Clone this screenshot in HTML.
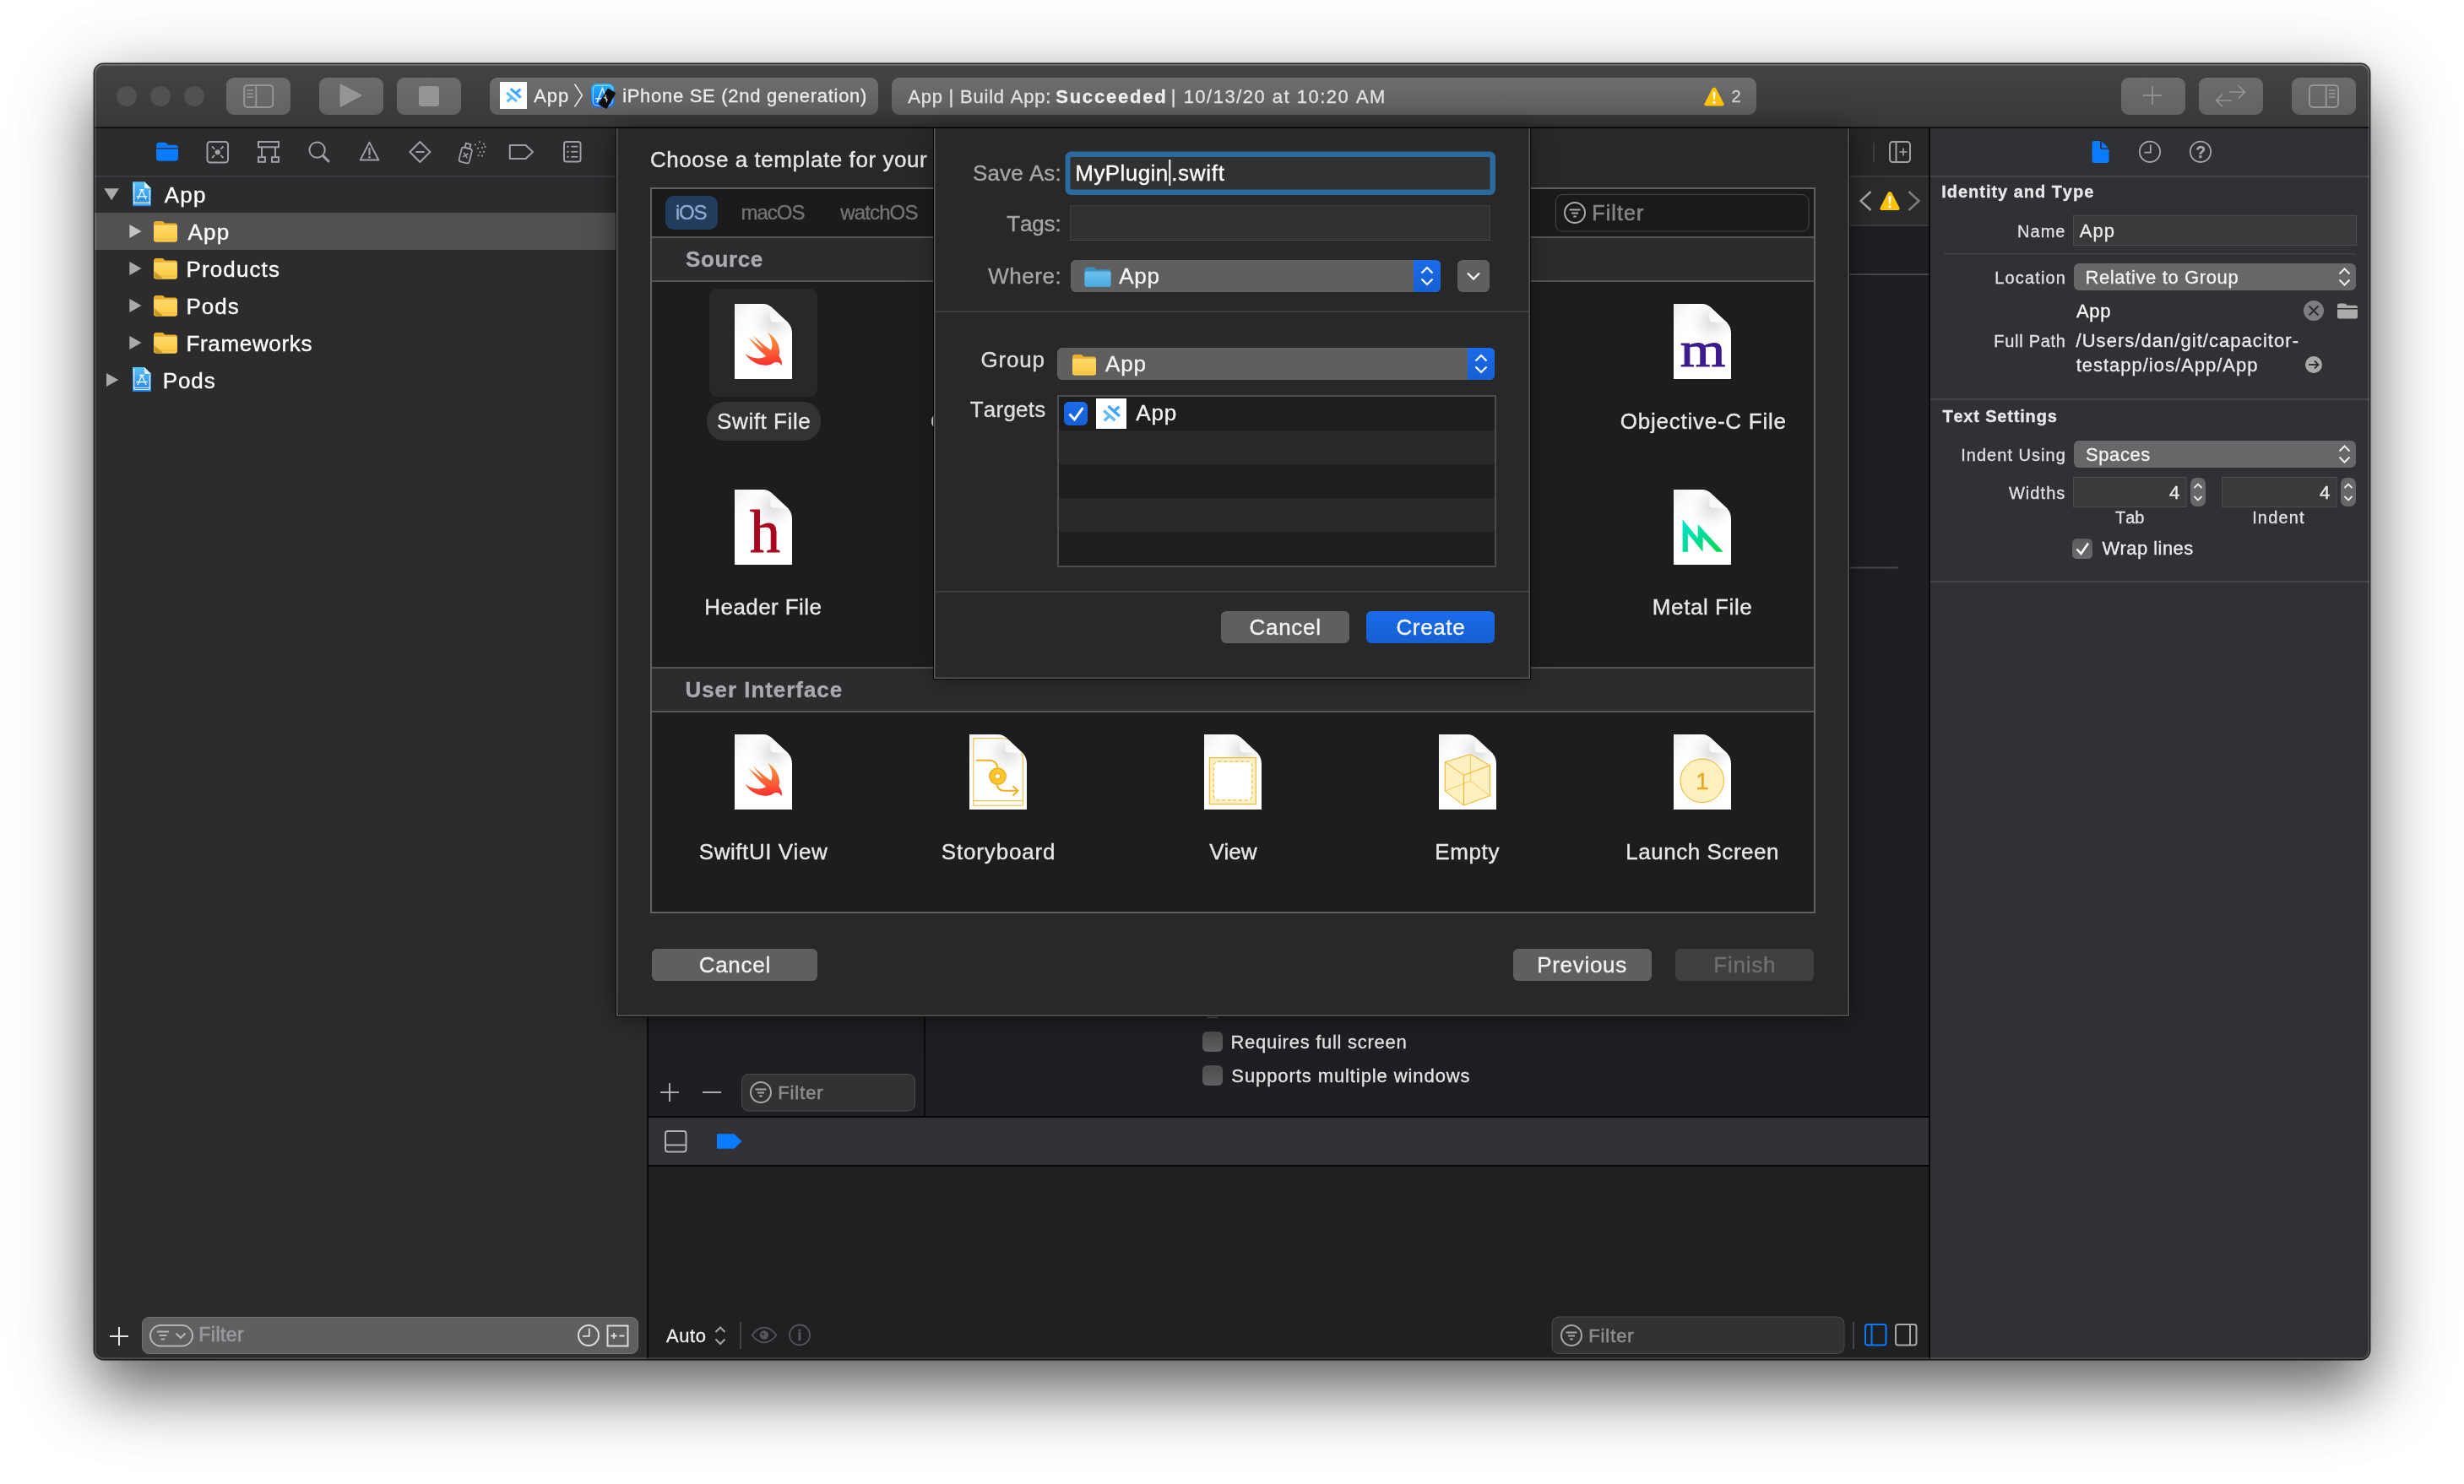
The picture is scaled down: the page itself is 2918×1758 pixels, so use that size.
<!DOCTYPE html>
<html><head><meta charset="utf-8"><title>Xcode - New File</title>
<style>
html,body{margin:0;padding:0;background:#fff;}
body{width:2918px;height:1758px;overflow:hidden;position:relative;font-family:"Liberation Sans",Arial,sans-serif;}
#win{position:absolute;left:112px;top:76px;width:2694px;height:1534px;border-radius:10.5px;overflow:hidden;background:#2c2c2e;}
#winshadow{position:absolute;left:112px;top:76px;width:2694px;height:1534px;border-radius:10.5px;
 box-shadow:0 0 0 1.4px rgba(0,0,0,.82),0 35px 76px rgba(0,0,0,.56),0 24px 120px rgba(0,0,0,.16),0 0 4px rgba(0,0,0,.3);}
#winhi{position:absolute;left:112px;top:76px;width:2694px;height:1534px;border-radius:10.5px;box-shadow:inset 0 1.6px 0 rgba(255,255,255,.14),inset 0 0 0 1.8px rgba(255,255,255,.15);pointer-events:none;}
svg{position:absolute;left:-112px;top:-76px;width:2918px;height:1758px;overflow:visible;will-change:transform;}
svg text{font-family:"Liberation Sans",Arial,sans-serif;font-kerning:none;white-space:pre;}
svg text.sf{font-family:"Liberation Serif","Times New Roman",serif;}
.sh{position:absolute;}
#sheet{left:618px;top:76px;width:1460px;height:1052px;box-shadow:0 0 0 1px rgba(0,0,0,.7),0 2px 30px rgba(0,0,0,.5);background:#282828;}
#save{left:994px;top:76px;width:706px;height:652px;box-shadow:0 0 0 1px rgba(0,0,0,.75),0 4px 26px rgba(0,0,0,.32);background:#282828;}
</style></head><body>
<div id="winshadow"></div>
<div id="win">
<svg viewBox="0 0 2918 1758">
<defs>
<linearGradient id="gTb" x1="0" y1="0" x2="0" y2="1"><stop offset="0" stop-color="#434446"/><stop offset="1" stop-color="#37383a"/></linearGradient>
<linearGradient id="gBtn" x1="0" y1="0" x2="0" y2="1"><stop offset="0" stop-color="#6b6c6e"/><stop offset="1" stop-color="#626365"/></linearGradient>
<linearGradient id="gFld" x1="0" y1="0" x2="0" y2="1"><stop offset="0" stop-color="#6d6e70"/><stop offset="1" stop-color="#5e5f61"/></linearGradient>
<linearGradient id="gBlue" x1="0" y1="0" x2="0" y2="1"><stop offset="0" stop-color="#1a6cea"/><stop offset="1" stop-color="#155fd2"/></linearGradient>
<linearGradient id="gChk" x1="0" y1="0" x2="0" y2="1"><stop offset="0" stop-color="#4c4c4e"/><stop offset="1" stop-color="#606062"/></linearGradient>
<linearGradient id="gChkOn" x1="0" y1="0" x2="0" y2="1"><stop offset="0" stop-color="#5c5c5f"/><stop offset="1" stop-color="#6a6a6d"/></linearGradient>
<linearGradient id="gPage" x1="0" y1="0" x2="0.5" y2="0.55"><stop offset="0" stop-color="#efefef"/><stop offset="0.32" stop-color="#fbfbfb"/><stop offset="0.55" stop-color="#ffffff"/></linearGradient>
<radialGradient id="gFoldSh" cx="45" cy="21" r="26" gradientUnits="userSpaceOnUse"><stop offset="0" stop-color="#000" stop-opacity="0.13"/><stop offset="0.6" stop-color="#000" stop-opacity="0.04"/><stop offset="1" stop-color="#000" stop-opacity="0"/></radialGradient>
<linearGradient id="gFlap" x1="0" y1="0" x2="1" y2="1"><stop offset="0" stop-color="#f4f4f4"/><stop offset="1" stop-color="#ffffff"/></linearGradient>
<linearGradient id="gSwift" x1="0" y1="0" x2="0" y2="1"><stop offset="0" stop-color="#fb9b3c"/><stop offset="0.5" stop-color="#fa6a38"/><stop offset="1" stop-color="#fb2d2f"/></linearGradient>
<linearGradient id="gMetal" x1="0" y1="0" x2="1" y2="1"><stop offset="0" stop-color="#00e3d2"/><stop offset="0.5" stop-color="#00dc96"/><stop offset="1" stop-color="#06d83e"/></linearGradient>
<linearGradient id="gXc" x1="0" y1="0" x2="0" y2="1"><stop offset="0" stop-color="#1fb4fb"/><stop offset="1" stop-color="#1668f5"/></linearGradient>
<linearGradient id="gProj" x1="0" y1="0" x2="0" y2="1"><stop offset="0" stop-color="#5bc3f7"/><stop offset="1" stop-color="#1b7fe8"/></linearGradient>
<linearGradient id="gFoldY" x1="0" y1="0" x2="0" y2="1"><stop offset="0" stop-color="#ffd968"/><stop offset="1" stop-color="#fbc944"/></linearGradient>
<linearGradient id="gFoldB" x1="0" y1="0" x2="0" y2="1"><stop offset="0" stop-color="#6cc3ee"/><stop offset="1" stop-color="#48a8de"/></linearGradient>
<linearGradient id="gSideSh" x1="0" y1="0" x2="1" y2="0"><stop offset="0" stop-color="#000" stop-opacity="0"/><stop offset="1" stop-color="#000" stop-opacity="0.28"/></linearGradient>
<clipPath id="cpPage"><path d="M0 0H34Q39.5 0 43.5 3.8L63 22Q68 27 68 35V89H0Z"/></clipPath>
<g id="page">
<path d="M0 0H34Q39.5 0 43.5 3.8L63 22Q68 27 68 35V89H0Z" fill="url(#gPage)"/>
<g clip-path="url(#cpPage)"><circle cx="45" cy="21" r="26" fill="url(#gFoldSh)"/></g>
<path d="M42 3.2Q43 3.4 43.5 3.8L63 22Q63.6 22.6 64 23.2Q60 21.4 54 21.6H47Q42.4 21.6 42.4 17V9Q42.6 5 42 3.2Z" fill="url(#gFlap)"/>
</g>
<g id="swiftbird"><path transform="translate(6.7,25.8) scale(2.4)" fill="url(#gSwift)" d="M13.543 3.41c4.114 2.47 6.545 7.162 5.549 11.131-.024.093-.05.181-.076.272l.002.001c2.062 2.538 1.5 5.258 1.236 4.745-1.072-2.086-3.066-1.568-4.088-1.043a6.803 6.803 0 0 1-.281.158l-.02.012-.002.002c-2.115 1.123-4.957 1.205-7.812-.022a12.568 12.568 0 0 1-5.64-4.838c.649.48 1.35.902 2.097 1.252 3.019 1.414 6.051 1.311 8.197-.002C9.651 12.73 7.101 9.67 5.146 7.191a10.628 10.628 0 0 1-1.005-1.384c2.34 2.142 6.038 4.83 7.365 5.576C8.69 8.408 6.208 4.743 6.324 4.86c4.436 4.47 8.528 6.996 8.528 6.996.154.085.27.154.36.213.085-.215.16-.437.224-.668.708-2.588-.09-5.548-1.893-7.992z"/></g>
<g id="capico"><rect x="0" y="0" width="32" height="32" fill="#fff"/>
<path d="M12.8 8.1L24.7 18.7M19.6 12.9L24.3 8.6" stroke="#3fa4ff" stroke-width="3" fill="none"/>
<path d="M8.2 12.8L20 23.1M13.6 18.8L8.6 23.4" stroke="#5cbcff" stroke-width="3" fill="none"/></g>
<g id="foldY"><path d="M0 4.5Q0 1.5 3 1.5H9.5Q11.3 1.5 12.3 2.8L13.2 4H25Q28 4 28 7V23Q28 26 25 26H3Q0 26 0 23Z" fill="#e8ae2c"/>
<path d="M0 8.2Q0 6.2 2 6.2H26Q28 6.2 28 8.2V23Q28 26 25 26H3Q0 26 0 23Z" fill="url(#gFoldY)"/><path d="M0.4 22.6H27.6" stroke="#eab83a" stroke-width="1"/></g>
<g id="foldY2"><use href="#foldY"/><path d="M0.6 16.5L11 25.6H3Q0.6 25.4 0.6 23Z" fill="#b98a1e" opacity="0.75"/></g>
<g id="proj"><path d="M0 0H14L22 8V29H0Z" fill="url(#gProj)"/><path d="M14 0L22 8H15.5Q14 8 14 6.5Z" fill="#d9f0ff"/>
<path d="M1.8 2V26.5H20.2V9.5" fill="none" stroke="#ffffff" stroke-width="1.1" opacity="0.9"/>
<path d="M1.5 24.3H20.5" stroke="#fff" stroke-width="1" opacity="0.9"/>
<path d="M6 21L11 9.5L16 21M4.5 17.5H17.5M8 9.5h6" fill="none" stroke="#ffffff" stroke-width="1.3" opacity="0.92"/></g>
<g id="filt"><circle cx="0" cy="0" r="12" fill="none" stroke-width="2"/><path d="M-6.5 -3.5H6.5M-4 0.5H4M-1.8 4.5H1.8" stroke-width="2" fill="none"/></g>
<g id="warn"><path d="M0 -11.5Q1.6 -11.5 2.5 -9.8L11.2 7.2Q12.6 10.2 9.5 10.5H-9.5Q-12.6 10.2 -11.2 7.2L-2.5 -9.8Q-1.6 -11.5 0 -11.5Z" fill="#fec309"/><path d="M-1.6 -5.5Q0 -7 1.6 -5.5L0.9 3.2H-0.9Z" fill="#fff"/><circle cx="0" cy="6.4" r="1.55" fill="#fff"/></g>
</defs>

<rect x="112" y="75" width="2694" height="76" fill="url(#gTb)"/>
<rect x="112" y="150.5" width="2694" height="1.4" fill="#050506"/>
<rect x="112" y="152" width="654" height="1458" fill="#2c2c2e"/>
<rect x="768" y="152" width="1516" height="1458" fill="#1e1f22"/>
<rect x="766" y="152" width="2" height="1458" fill="#0a0a0b"/>
<rect x="2286" y="152" width="520" height="1458" fill="#303134"/>
<rect x="2284" y="152" width="2" height="1458" fill="#0a0a0b"/>
<circle cx="150" cy="114" r="12" fill="#505153"/>
<circle cx="190" cy="114" r="12" fill="#505153"/>
<circle cx="230" cy="114" r="12" fill="#505153"/>
<rect x="268" y="92" width="76" height="44" fill="url(#gBtn)" rx="9"/>
<rect x="378" y="92" width="76" height="44" fill="url(#gBtn)" rx="9"/>
<rect x="470" y="92" width="76" height="44" fill="url(#gBtn)" rx="9"/>
<rect x="2512" y="92" width="76" height="44" fill="url(#gBtn)" rx="9"/>
<rect x="2604" y="92" width="76" height="44" fill="url(#gBtn)" rx="9"/>
<rect x="2714" y="92" width="76" height="44" fill="url(#gBtn)" rx="9"/>
<rect x="289.2" y="101" width="34" height="26" fill="none" rx="4" stroke="#949597" stroke-width="2"/>
<line x1="303.3" y1="101" x2="303.3" y2="127" stroke="#949597" stroke-width="2" stroke-linecap="butt"/>
<line x1="292.4" y1="107" x2="299.9" y2="107" stroke="#949597" stroke-width="1.6" stroke-linecap="butt"/>
<line x1="292.4" y1="111" x2="299.9" y2="111" stroke="#949597" stroke-width="1.6" stroke-linecap="butt"/>
<line x1="292.4" y1="115" x2="299.9" y2="115" stroke="#949597" stroke-width="1.6" stroke-linecap="butt"/>
<path d="M402.5 100.5Q402.5 98.8 404 99.6L427.6 112Q429 113 427.6 114L404 126.4Q402.5 127.2 402.5 125.5Z" fill="#949597"/>
<rect x="496" y="102" width="24" height="24" fill="#949597" rx="3"/>
<line x1="2538" y1="113" x2="2560" y2="113" stroke="#949597" stroke-width="1.7" stroke-linecap="butt"/>
<line x1="2549" y1="102" x2="2549" y2="124" stroke="#949597" stroke-width="1.7" stroke-linecap="butt"/>
<path d="M2640 109H2658.5M2650.8 101.5L2658.5 109L2650.8 116.5" fill="none" stroke="#949597" stroke-width="1.7"/>
<path d="M2643 119H2624.6M2632.3 111.5L2624.6 119L2632.3 126.5" fill="none" stroke="#949597" stroke-width="1.7"/>
<rect x="2735" y="101" width="34" height="26" fill="none" rx="4" stroke="#949597" stroke-width="2"/>
<line x1="2754.7" y1="101" x2="2754.7" y2="127" stroke="#949597" stroke-width="2" stroke-linecap="butt"/>
<line x1="2758.2" y1="107" x2="2765.7" y2="107" stroke="#949597" stroke-width="1.6" stroke-linecap="butt"/>
<line x1="2758.2" y1="111" x2="2765.7" y2="111" stroke="#949597" stroke-width="1.6" stroke-linecap="butt"/>
<line x1="2758.2" y1="115" x2="2765.7" y2="115" stroke="#949597" stroke-width="1.6" stroke-linecap="butt"/>
<rect x="580" y="92" width="460" height="44" fill="url(#gFld)" rx="9"/>
<use href="#capico" x="592" y="97"/>
<text x="632.26" y="120.50" font-size="22" fill="#ececec" letter-spacing="0.911" stroke="#ececec" stroke-width="0.3">App</text>
<path d="M680.5 99.5L689.4 113L680.5 126.5" fill="none" stroke="#e4e4e4" stroke-width="1.6"/>
<rect x="700" y="99" width="27.5" height="28.3" fill="url(#gXc)" rx="6.5"/>
<rect x="702.3" y="101.3" width="22.9" height="23.7" fill="none" rx="4.5" stroke="#bfe4ff" stroke-width="0.9"/>
<path d="M707 121.5L713.5 104.5L716.5 113M705 116.8H716" fill="none" stroke="#d6eeff" stroke-width="1.6"/>
<rect x="713.3" y="105.6" width="11.4" height="22.4" rx="1.9" fill="#0c0c0c" transform="rotate(31 719 116.8)"/>
<path d="M714.8 114.8L719.8 118.6M717 112L718.6 121.2" fill="none" stroke="#d8d8d8" stroke-width="1.1"/>
<text x="737.13" y="120.50" font-size="22" fill="#ececec" letter-spacing="0.709" stroke="#ececec" stroke-width="0.3">iPhone SE (2nd generation)</text>
<rect x="1056" y="92" width="1024" height="44" fill="url(#gFld)" rx="9"/>
<text x="1075.26" y="122.00" font-size="22" fill="#e2e2e2" letter-spacing="0.779" stroke="#e2e2e2" stroke-width="0.3">App | Build App:</text>
<text x="1250.17" y="122.00" font-size="22" fill="#efefef" font-weight="bold" letter-spacing="1.802" stroke="#efefef" stroke-width="0.3">Succeeded</text>
<text x="1386.83" y="122.00" font-size="22" fill="#e2e2e2" letter-spacing="1.494" stroke="#e2e2e2" stroke-width="0.3">| 10/13/20 at 10:20 AM</text>
<use href="#warn" x="2030" y="115"/>
<text x="2050.49" y="121.20" font-size="20" fill="#d2d2d2" stroke="#d2d2d2" stroke-width="0.3">2</text>
<rect x="112" y="208" width="654" height="2" fill="#3b3c3f"/>
<path d="M185 172.8Q185 168.8 189 168.8H194.5Q196.3 168.8 197.6 170.1L199.2 171.7H207Q211 171.7 211 175.2H185Z" fill="#0a7aff"/>
<path d="M185 176.6H211V186.8Q211 190.8 207 190.8H189Q185 190.8 185 186.8Z" fill="#0a7aff"/>
<rect x="245.5" y="168" width="24.5" height="24.5" fill="none" rx="3.2" stroke="#9fa0a3" stroke-width="2"/>
<circle cx="257.75" cy="180.25" r="3.1" fill="#9fa0a3"/>
<path d="M251 173.5L254.2 176.7M264.5 173.5L261.3 176.7M251 187L254.2 183.8M264.5 187L261.3 183.8" fill="none" stroke="#9fa0a3" stroke-width="1.8"/>
<rect x="306" y="168" width="24" height="6.3" fill="none" stroke="#9fa0a3" stroke-width="2"/>
<rect x="306" y="186.2" width="8" height="5.6" fill="none" stroke="#9fa0a3" stroke-width="2"/>
<rect x="322" y="186.2" width="8" height="5.6" fill="none" stroke="#9fa0a3" stroke-width="2"/>
<line x1="310" y1="174.3" x2="310" y2="186.2" stroke="#9fa0a3" stroke-width="2" stroke-linecap="butt"/>
<line x1="326" y1="174.3" x2="326" y2="186.2" stroke="#9fa0a3" stroke-width="2" stroke-linecap="butt"/>
<circle cx="375.6" cy="177.6" r="9.2" fill="none" stroke="#9fa0a3" stroke-width="2"/>
<line x1="382.6" y1="184.6" x2="389" y2="191" stroke="#9fa0a3" stroke-width="3" stroke-linecap="round"/>
<path d="M437.5 168.6L448.3 189.6H426.7Z" fill="none" stroke="#9fa0a3" stroke-width="2" stroke-linejoin="round"/>
<line x1="437.5" y1="176" x2="437.5" y2="183" stroke="#9fa0a3" stroke-width="2.2" stroke-linecap="round"/>
<circle cx="437.5" cy="186.3" r="1.3" fill="#9fa0a3"/>
<path d="M497.4 168L509.4 180L497.4 192L485.4 180Z" fill="none" stroke="#9fa0a3" stroke-width="2" stroke-linejoin="round"/>
<line x1="492.3" y1="180" x2="502.5" y2="180" stroke="#9fa0a3" stroke-width="2" stroke-linecap="butt"/>
<g transform="rotate(14 551.5 183)" fill="none" stroke="#9fa0a3" stroke-width="1.8"><rect x="545.3" y="175.3" width="12.4" height="17.4" rx="2.6"/><rect x="548.6" y="170" width="5.8" height="5.3"/><path d="M548.8 181.3L554.2 186.7M554.2 181.3L548.8 186.7" stroke-width="1.5"/></g>
<rect x="562.1" y="170.6" width="1.8" height="1.8" fill="#9fa0a3"/>
<rect x="567.1" y="167.4" width="1.8" height="1.8" fill="#9fa0a3"/>
<rect x="572.1" y="169.6" width="1.8" height="1.8" fill="#9fa0a3"/>
<rect x="565.1" y="174.7" width="1.8" height="1.8" fill="#9fa0a3"/>
<rect x="570.1" y="174.1" width="1.8" height="1.8" fill="#9fa0a3"/>
<rect x="573.6" y="172.9" width="1.8" height="1.8" fill="#9fa0a3"/>
<rect x="567.6" y="179.3" width="1.8" height="1.8" fill="#9fa0a3"/>
<rect x="572.1" y="178.9" width="1.8" height="1.8" fill="#9fa0a3"/>
<rect x="565.6" y="183.4" width="1.8" height="1.8" fill="#9fa0a3"/>
<rect x="570.1" y="183.6" width="1.8" height="1.8" fill="#9fa0a3"/>
<path d="M603.8 172H622.5L631 180L622.5 188H603.8Z" fill="none" stroke="#9fa0a3" stroke-width="2" stroke-linejoin="round"/>
<rect x="668" y="168" width="19.5" height="23.6" fill="none" rx="2.6" stroke="#9fa0a3" stroke-width="2"/>
<line x1="676.3" y1="173.6" x2="684.3" y2="173.6" stroke="#9fa0a3" stroke-width="1.8" stroke-linecap="butt"/>
<rect x="671.4" y="172.7" width="2.2" height="1.8" fill="#9fa0a3"/>
<line x1="676.3" y1="179.8" x2="684.3" y2="179.8" stroke="#9fa0a3" stroke-width="1.8" stroke-linecap="butt"/>
<rect x="671.4" y="178.9" width="2.2" height="1.8" fill="#9fa0a3"/>
<line x1="676.3" y1="185.8" x2="684.3" y2="185.8" stroke="#9fa0a3" stroke-width="1.8" stroke-linecap="butt"/>
<rect x="671.4" y="184.9" width="2.2" height="1.8" fill="#9fa0a3"/>
<rect x="112" y="252" width="654" height="44" fill="#515153"/>
<path d="M123.3 223.3H141L132.1 237.2Z" fill="#a9a9ab"/>
<use href="#proj" x="157" y="215.3"/>
<text x="194.75" y="239.70" font-size="26" fill="#ffffff" letter-spacing="1.190" stroke="#ffffff" stroke-width="0.35">App</text>
<path d="M153.4 266 V282 L167.6 274 Z" fill="#c4c4c6"/>
<use href="#foldY" x="182" y="260.5"/>
<text x="222.55" y="283.75" font-size="26" fill="#ffffff" letter-spacing="1.140" stroke="#ffffff" stroke-width="0.35">App</text>
<path d="M153.4 310 V326 L167.6 318 Z" fill="#a9a9ab"/>
<use href="#foldY2" x="182" y="304.5"/>
<text x="220.47" y="327.75" font-size="26" fill="#ffffff" letter-spacing="1.124" stroke="#ffffff" stroke-width="0.35">Products</text>
<path d="M153.4 354 V370 L167.6 362 Z" fill="#a9a9ab"/>
<use href="#foldY2" x="182" y="348.5"/>
<text x="220.47" y="371.75" font-size="26" fill="#ffffff" letter-spacing="0.970" stroke="#ffffff" stroke-width="0.35">Pods</text>
<path d="M153.4 398 V414 L167.6 406 Z" fill="#a9a9ab"/>
<use href="#foldY2" x="182" y="392.5"/>
<text x="220.47" y="415.75" font-size="26" fill="#ffffff" letter-spacing="0.662" stroke="#ffffff" stroke-width="0.35">Frameworks</text>
<path d="M126 442 V458 L140.2 450 Z" fill="#a9a9ab"/>
<use href="#proj" x="157" y="435"/>
<text x="192.67" y="459.70" font-size="26" fill="#ffffff" letter-spacing="0.904" stroke="#ffffff" stroke-width="0.35">Pods</text>
<line x1="130" y1="1583" x2="152" y2="1583" stroke="#e6e6e6" stroke-width="2" stroke-linecap="butt"/>
<line x1="141" y1="1572" x2="141" y2="1594" stroke="#e6e6e6" stroke-width="2" stroke-linecap="butt"/>
<rect x="168.5" y="1560.5" width="587" height="43" fill="#5e5f61" rx="8" stroke="#737376" stroke-width="1"/>
<rect x="178" y="1570" width="50" height="24.5" fill="none" rx="12.25" stroke="#b4b4b7" stroke-width="2"/>
<path d="M186 1577.5H200M188.6 1582H197.4M190.8 1586.5H195.2" fill="none" stroke="#b4b4b7" stroke-width="1.8"/>
<path d="M208.5 1579.5L214 1585L219.5 1579.5" fill="none" stroke="#b4b4b7" stroke-width="2.2"/>
<text x="235.31" y="1589.00" font-size="23" fill="#99999c" letter-spacing="0.472" stroke="#99999c" stroke-width="0.7">Filter</text>
<circle cx="697" cy="1582" r="12" fill="none" stroke="#dcdcde" stroke-width="2"/>
<path d="M697.8 1573.5V1582.8H690" fill="none" stroke="#dcdcde" stroke-width="1.8"/>
<rect x="719.5" y="1570.5" width="24" height="24" fill="none" stroke="#dcdcde" stroke-width="2"/>
<path d="M723.5 1582.5H730.5M727 1579V1586M733.5 1582.5H739.5" fill="none" stroke="#dcdcde" stroke-width="1.8"/>
<rect x="768" y="152" width="1516" height="57" fill="#262729"/>
<rect x="768" y="208" width="1516" height="2" fill="#3a3b3d"/>
<rect x="768" y="210" width="1516" height="57" fill="#2a2b2d"/>
<rect x="768" y="266" width="1516" height="2" fill="#3a3b3d"/>
<rect x="768" y="324" width="1516" height="2" fill="#47484a"/>
<rect x="2190" y="671.5" width="58" height="2" fill="#47484a"/>
<line x1="2219" y1="169" x2="2219" y2="192" stroke="#444547" stroke-width="1.5" stroke-linecap="butt"/>
<rect x="2238" y="168" width="24" height="24" fill="none" rx="3.5" stroke="#a0a1a3" stroke-width="2"/>
<line x1="2245.5" y1="168" x2="2245.5" y2="192" stroke="#a0a1a3" stroke-width="2" stroke-linecap="butt"/>
<path d="M2249.5 180H2258.5M2254 175.5V184.5" fill="none" stroke="#a0a1a3" stroke-width="1.7"/>
<path d="M2215.5 227L2203.5 238L2215.5 249" fill="none" stroke="#a9aaac" stroke-width="2.4"/>
<path d="M2260.5 227L2272.5 238L2260.5 249" fill="none" stroke="#7f8082" stroke-width="2.4"/>
<use href="#warn" x="2238" y="238.5"/>
<rect x="1094" y="1204" width="2" height="118" fill="#0a0a0b"/>
<line x1="782" y1="1294" x2="804" y2="1294" stroke="#b9b9bb" stroke-width="1.8" stroke-linecap="butt"/>
<line x1="793" y1="1283" x2="793" y2="1305" stroke="#b9b9bb" stroke-width="1.8" stroke-linecap="butt"/>
<line x1="832" y1="1294" x2="854" y2="1294" stroke="#b9b9bb" stroke-width="1.8" stroke-linecap="butt"/>
<rect x="878.5" y="1272.5" width="205" height="43.5" fill="#323234" rx="8" stroke="#4b4b4d" stroke-width="1"/>
<use href="#filt" x="901" y="1294" stroke="#a6a6a8"/>
<text x="921.20" y="1302.00" font-size="22" fill="#8c8c8f" letter-spacing="0.916" stroke="#8c8c8f" stroke-width="0.6">Filter</text>
<rect x="1427" y="1195" width="18" height="11" fill="url(#gChk)" rx="5"/>
<rect x="1424" y="1222" width="24" height="24" fill="url(#gChk)" rx="5.5"/>
<text x="1457.50" y="1242.00" font-size="22" fill="#e4e4e4" letter-spacing="0.727" stroke="#e4e4e4" stroke-width="0.3">Requires full screen</text>
<rect x="1424" y="1262" width="24" height="24" fill="url(#gChk)" rx="5.5"/>
<text x="1458.30" y="1282.00" font-size="22" fill="#e4e4e4" letter-spacing="0.910" stroke="#e4e4e4" stroke-width="0.3">Supports multiple windows</text>
<rect x="768" y="1322" width="1516" height="2" fill="#060607"/>
<rect x="768" y="1324" width="1516" height="56" fill="#313235"/>
<rect x="768" y="1380" width="1516" height="2" fill="#060607"/>
<rect x="768" y="1382" width="1516" height="228" fill="#1f2022"/>
<rect x="788" y="1340" width="24.5" height="24.5" fill="none" rx="3" stroke="#b2b2b4" stroke-width="2"/>
<line x1="788" y1="1356.5" x2="812.5" y2="1356.5" stroke="#b2b2b4" stroke-width="2" stroke-linecap="butt"/>
<path d="M849 1343.2H869.5L878.5 1352L869.5 1360.8H849Z" fill="#0a7aff"/>
<text x="788.96" y="1590.00" font-size="22" fill="#f0f0f0" letter-spacing="0.570" stroke="#f0f0f0" stroke-width="0.3">Auto</text>
<path d="M847.5 1578L853 1572.5L858.5 1578M847.5 1586.5L853 1592L858.5 1586.5" fill="none" stroke="#a4a4a6" stroke-width="2"/>
<line x1="877" y1="1566" x2="877" y2="1598" stroke="#4d4e50" stroke-width="1.6" stroke-linecap="butt"/>
<path d="M890.5 1581.5Q897.5 1572.6 905 1572.6Q912.5 1572.6 919.5 1581.5Q912.5 1590.4 905 1590.4Q897.5 1590.4 890.5 1581.5Z" fill="none" stroke="#55565a" stroke-width="1.8"/>
<circle cx="905" cy="1581.5" r="5.2" fill="#55565a"/>
<circle cx="903.6" cy="1580.2" r="1.3" fill="#1f2022"/>
<circle cx="947" cy="1581.5" r="12" fill="none" stroke="#55565a" stroke-width="1.8"/>
<text x="944.37" y="1588.30" font-size="19" fill="#55565a" font-weight="bold" stroke="#55565a" stroke-width="0.3">i</text>
<rect x="1838" y="1560" width="346" height="43.5" fill="#323234" rx="8" stroke="#4b4b4d" stroke-width="1"/>
<use href="#filt" x="1861" y="1582" stroke="#a6a6a8"/>
<text x="1881.20" y="1589.50" font-size="22" fill="#8c8c8f" letter-spacing="0.916" stroke="#8c8c8f" stroke-width="0.6">Filter</text>
<line x1="2195" y1="1566" x2="2195" y2="1598" stroke="#505153" stroke-width="1.6" stroke-linecap="butt"/>
<rect x="2209" y="1569" width="24.5" height="24.5" fill="none" rx="3" stroke="#0a7aff" stroke-width="2"/>
<line x1="2216.5" y1="1569" x2="2216.5" y2="1593.5" stroke="#0a7aff" stroke-width="2" stroke-linecap="butt"/>
<rect x="2245" y="1569" width="24.5" height="24.5" fill="none" rx="3" stroke="#a9a9ab" stroke-width="2"/>
<line x1="2262" y1="1569" x2="2262" y2="1593.5" stroke="#a9a9ab" stroke-width="2" stroke-linecap="butt"/>
<rect x="2286" y="208" width="520" height="2" fill="#434447"/>
<path d="M2477.5 170Q2477.5 167 2480.5 167H2487V174.2Q2487 176.8 2489.6 176.8H2497.5V190Q2497.5 193 2494.5 193H2480.5Q2477.5 193 2477.5 190Z" fill="#0a7aff"/>
<path d="M2488.8 167.4L2497.1 175.2H2490Q2488.8 175.2 2488.8 174Z" fill="#0a7aff"/>
<circle cx="2546" cy="179.8" r="12.2" fill="none" stroke="#a5a6a8" stroke-width="1.8"/>
<path d="M2546.8 171.5V180.6H2539.5" fill="none" stroke="#a5a6a8" stroke-width="1.8"/>
<circle cx="2606" cy="179.8" r="12.2" fill="none" stroke="#a5a6a8" stroke-width="1.8"/>
<text x="2600.16" y="186.60" font-size="19.5" fill="#a5a6a8" font-weight="bold" stroke="#a5a6a8" stroke-width="0.3">?</text>
<text x="2299.26" y="234.00" font-size="20" fill="#e8e8ea" font-weight="bold" letter-spacing="0.972" stroke="#e8e8ea" stroke-width="0.3">Identity and Type</text>
<text x="2388.96" y="281.00" font-size="20" fill="#e2e2e4" letter-spacing="1.060" stroke="#e2e2e4" stroke-width="0.3">Name</text>
<rect x="2455.5" y="255.5" width="335" height="35" fill="#3a3a3d" stroke="#4d4d50" stroke-width="1"/>
<text x="2462.76" y="281.00" font-size="22" fill="#ececee" letter-spacing="1.011" stroke="#ececee" stroke-width="0.3">App</text>
<rect x="2302" y="300" width="488" height="1.5" fill="#434447"/>
<text x="2362.36" y="335.60" font-size="20" fill="#e2e2e4" letter-spacing="1.132" stroke="#e2e2e4" stroke-width="0.3">Location</text>
<rect x="2456" y="312" width="334" height="32" fill="#67676a" rx="6"/>
<text x="2469.40" y="335.60" font-size="22" fill="#f2f2f4" letter-spacing="0.633" stroke="#f2f2f4" stroke-width="0.3">Relative to Group</text>
<path d="M2770.5 324.5L2776.5 318.5L2782.5 324.5M2770.5 331.5L2776.5 337.5L2782.5 331.5" fill="none" stroke="#ececee" stroke-width="2"/>
<text x="2458.96" y="375.50" font-size="22" fill="#ffffff" letter-spacing="0.711" stroke="#ffffff" stroke-width="0.3">App</text>
<circle cx="2740" cy="368" r="12" fill="#7e7e81"/>
<path d="M2734.5 362.5L2745.5 373.5M2745.5 362.5L2734.5 373.5" fill="none" stroke="#303134" stroke-width="2.2"/>
<path d="M2768 362Q2768 359.5 2770.5 359.5H2776Q2777.5 359.5 2778.5 360.5L2779.8 361.8H2789.5Q2792 361.8 2792 364.3V365H2768Z" fill="#a9abab"/>
<path d="M2768 366.6H2792V375Q2792 377.5 2789.5 377.5H2770.5Q2768 377.5 2768 375Z" fill="#a9abab"/>
<text x="2361.36" y="411.00" font-size="20" fill="#e2e2e4" letter-spacing="0.702" stroke="#e2e2e4" stroke-width="0.3">Full Path</text>
<text x="2458.50" y="411.00" font-size="22" fill="#ececee" letter-spacing="1.043" stroke="#ececee" stroke-width="0.3">/Users/dan/git/capacitor-</text>
<text x="2458.67" y="439.50" font-size="22" fill="#ececee" letter-spacing="0.991" stroke="#ececee" stroke-width="0.3">testapp/ios/App/App</text>
<circle cx="2740" cy="432" r="10" fill="#a9abab"/>
<path d="M2734 432H2745M2741 427.5L2745.5 432L2741 436.5" fill="none" stroke="#303134" stroke-width="2"/>
<rect x="2286" y="472" width="520" height="2" fill="#434447"/>
<text x="2300.38" y="500.00" font-size="20" fill="#e8e8ea" font-weight="bold" letter-spacing="0.822" stroke="#e8e8ea" stroke-width="0.3">Text Settings</text>
<text x="2322.15" y="545.50" font-size="20" fill="#e2e2e4" letter-spacing="1.040" stroke="#e2e2e4" stroke-width="0.3">Indent Using</text>
<rect x="2456" y="522" width="334" height="32" fill="#67676a" rx="6"/>
<text x="2470.00" y="545.50" font-size="22" fill="#f2f2f4" letter-spacing="0.583" stroke="#f2f2f4" stroke-width="0.3">Spaces</text>
<path d="M2770.5 534.5L2776.5 528.5L2782.5 534.5M2770.5 541.5L2776.5 547.5L2782.5 541.5" fill="none" stroke="#ececee" stroke-width="2"/>
<text x="2378.91" y="591.00" font-size="20" fill="#e2e2e4" letter-spacing="1.057" stroke="#e2e2e4" stroke-width="0.3">Widths</text>
<rect x="2455.5" y="565.5" width="133.5" height="35" fill="#3a3a3d" stroke="#4d4d50" stroke-width="1"/>
<text x="2568.91" y="591.00" font-size="22" fill="#ececee" stroke="#ececee" stroke-width="0.3">4</text>
<rect x="2594" y="566" width="18" height="34" fill="#67676a" rx="7"/>
<path d="M2598.5 578L2603 573.5L2607.5 578M2598.5 588L2603 592.5L2607.5 588" fill="none" stroke="#ececee" stroke-width="1.8"/>
<rect x="2631.5" y="565.5" width="135.5" height="35" fill="#3a3a3d" stroke="#4d4d50" stroke-width="1"/>
<text x="2746.91" y="591.00" font-size="22" fill="#ececee" stroke="#ececee" stroke-width="0.3">4</text>
<rect x="2772" y="566" width="18" height="34" fill="#67676a" rx="7"/>
<path d="M2776.5 578L2781 573.5L2785.5 578M2776.5 588L2781 592.5L2785.5 588" fill="none" stroke="#ececee" stroke-width="1.8"/>
<text x="2505.05" y="620.00" font-size="20" fill="#e2e2e4" letter-spacing="-0.087" stroke="#e2e2e4" stroke-width="0.3">Tab</text>
<text x="2667.15" y="620.00" font-size="20" fill="#e2e2e4" letter-spacing="1.177" stroke="#e2e2e4" stroke-width="0.3">Indent</text>
<rect x="2454" y="638" width="24" height="24" fill="url(#gChkOn)" rx="5.5"/>
<path d="M2459.5 650.5L2464.5 656L2473 643.5" fill="none" stroke="#ffffff" stroke-width="2.6"/>
<text x="2489.40" y="657.00" font-size="22" fill="#ececee" letter-spacing="0.441" stroke="#ececee" stroke-width="0.3">Wrap lines</text>
<rect x="2286" y="688" width="520" height="2" fill="#434447"/>
</svg>
<div class="sh" id="sheet"></div>
<svg viewBox="0 0 2918 1758">
<path d="M730.75 152V1203.25H2189.25V152" fill="none" stroke="#58585a" stroke-width="1.5"/>
<text x="769.88" y="197.50" font-size="26" fill="#e6e6e6" letter-spacing="0.570" stroke="#e6e6e6" stroke-width="0.35">Choose a template for your</text>
<text x="1104.77" y="197.50" font-size="26" fill="#e6e6e6" stroke="#e6e6e6" stroke-width="0.35">new file:</text>
<rect x="771" y="223" width="1378" height="858" fill="#1d1d1f" stroke="#626264" stroke-width="2"/>
<rect x="772" y="224" width="1376" height="56" fill="#1b1b1c"/>
<rect x="772" y="280" width="1376" height="2" fill="#555557"/>
<rect x="788" y="232" width="62" height="40" fill="#223c5d" rx="10"/>
<text x="799.89" y="260.30" font-size="24" fill="#8eaacd" letter-spacing="-1.150" stroke="#8eaacd" stroke-width="0.35">iOS</text>
<text x="877.41" y="260.30" font-size="24" fill="#747477" letter-spacing="-1.005" stroke="#747477" stroke-width="0.35">macOS</text>
<text x="995.34" y="260.30" font-size="24" fill="#747477" letter-spacing="-0.884" stroke="#747477" stroke-width="0.35">watchOS</text>
<text x="1129.64" y="260.30" font-size="24" fill="#747477" stroke="#747477" stroke-width="0.35">tvOS</text>
<rect x="1842.5" y="230.5" width="299.5" height="43.5" fill="#1a1a1b" rx="8" stroke="#464648" stroke-width="1"/>
<use href="#filt" x="1865" y="252" stroke="#a8a8aa"/>
<text x="1885.25" y="261.00" font-size="25" fill="#858588" letter-spacing="1.122" stroke="#858588" stroke-width="0.6">Filter</text>
<rect x="772" y="282" width="1376" height="50" fill="#2c2c2e"/>
<rect x="772" y="332" width="1376" height="2" fill="#555557"/>
<text x="812.05" y="316.00" font-size="26" fill="#aaaaae" font-weight="bold" letter-spacing="0.599" stroke="#aaaaae" stroke-width="0.35">Source</text>
<rect x="772" y="790" width="1376" height="2" fill="#555557"/>
<rect x="772" y="792" width="1376" height="50" fill="#2c2c2e"/>
<rect x="772" y="842" width="1376" height="2" fill="#555557"/>
<text x="811.44" y="826.00" font-size="26" fill="#aaaaae" font-weight="bold" letter-spacing="0.949" stroke="#aaaaae" stroke-width="0.35">User Interface</text>
<rect x="840" y="342" width="128" height="128" fill="#28282a" rx="9"/>
<rect x="837" y="476" width="135" height="46" fill="#333335" rx="21"/>
<use href="#page" x="870" y="360"/>
<use href="#swiftbird" x="870" y="360"/>
<text x="849.12" y="507.50" font-size="26" fill="#e8e8e8" letter-spacing="0.575" stroke="#e8e8e8" stroke-width="0.35">Swift File</text>
<use href="#page" x="1982" y="360"/>
<text transform="translate(1991.10 434.4) scale(1.149 1)" x="-1.26" y="0" font-size="60" class="sf" fill="#3b1a8c" stroke="#3b1a8c" stroke-width="1">m</text>
<text x="1918.77" y="507.50" font-size="26" fill="#e8e8e8" letter-spacing="0.750" stroke="#e8e8e8" stroke-width="0.35">Objective-C File</text>
<use href="#page" x="870" y="580"/>
<text x="887.90" y="654.40" font-size="72" fill="#a8061f" class="sf" stroke="#a8061f" stroke-width="0.9">h</text>
<text x="834.37" y="727.50" font-size="26" fill="#e8e8e8" letter-spacing="0.420" stroke="#e8e8e8" stroke-width="0.35">Header File</text>
<use href="#page" x="1982" y="580"/>
<path d="M1992.6 615.2L2010.7 637.5V621L2040.7 653.7H2032.6L2016.6 636.5V653.7L1998.9 632V653.7H1992.6Z" fill="url(#gMetal)"/>
<text x="1956.87" y="727.50" font-size="26" fill="#e8e8e8" letter-spacing="0.577" stroke="#e8e8e8" stroke-width="0.35">Metal File</text>
<use href="#page" x="1148" y="360"/>
<use href="#page" x="1148" y="580"/>
<use href="#page" x="1426" y="360"/>
<use href="#page" x="1426" y="580"/>
<use href="#page" x="1704" y="360"/>
<use href="#page" x="1704" y="580"/>
<text x="1101.88" y="507.50" font-size="26" fill="#e8e8e8" letter-spacing="0.617" stroke="#e8e8e8" stroke-width="0.35">Cocoa Touch</text>
<text x="1149.30" y="539.50" font-size="26" fill="#e8e8e8" stroke="#e8e8e8" stroke-width="0.35">Class</text>
<text x="1347.49" y="507.50" font-size="26" fill="#e8e8e8" stroke="#e8e8e8" stroke-width="0.35">UI Test Case Class</text>
<text x="1685.08" y="507.50" font-size="26" fill="#e8e8e8" stroke="#e8e8e8" stroke-width="0.35">Unit Test</text>
<text x="1425.97" y="727.50" font-size="26" fill="#e8e8e8" stroke="#e8e8e8" stroke-width="0.35">C File</text>
<text x="1688.79" y="727.50" font-size="26" fill="#e8e8e8" stroke="#e8e8e8" stroke-width="0.35">C++ File</text>
<text x="1117.15" y="727.50" font-size="26" fill="#e8e8e8" stroke="#e8e8e8" stroke-width="0.35">Sticker Pack</text>
<use href="#page" x="870" y="870"/>
<use href="#swiftbird" x="870" y="870"/>
<text x="827.82" y="1017.80" font-size="26" fill="#e8e8e8" letter-spacing="0.545" stroke="#e8e8e8" stroke-width="0.35">SwiftUI View</text>
<use href="#page" x="1148" y="870"/>
<g transform="translate(1148 870)" clip-path="url(#cpPage)"><path d="M4.8 84.2V4.6H38Q63.5 5.5 63.5 33V84.2Z" fill="none" stroke="#f0b01e" stroke-width="0.9"/></g>
<line x1="1152.8" y1="948.6" x2="1211.5" y2="948.6" stroke="#f0b01e" stroke-width="0.9" stroke-linecap="butt"/>
<path d="M1156.2 900.8H1172Q1180 901 1181.6 909.5" fill="none" stroke="#f0b01e" stroke-width="2"/>
<path d="M1180.5 929.5Q1182 937 1190 936.8H1204.5M1199.5 931.2L1205.6 936.8L1199.5 942.5" fill="none" stroke="#f0b01e" stroke-width="2"/>
<circle cx="1181.5" cy="919.6" r="9.6" fill="#ffc72c" stroke="#efae1b" stroke-width="1.6"/>
<circle cx="1181.5" cy="919.6" r="3.3" fill="#ffffff" stroke="#efae1b" stroke-width="1.2"/>
<text x="1114.82" y="1017.80" font-size="26" fill="#e8e8e8" letter-spacing="0.831" stroke="#e8e8e8" stroke-width="0.35">Storyboard</text>
<use href="#page" x="1426" y="870"/>
<rect x="1432.3" y="897.6" width="55" height="55" fill="#fff0c4" stroke="#f0b01e" stroke-width="1"/>
<rect x="1437.2" y="902.2" width="45.6" height="45.6" fill="#ffffff" rx="5.5" stroke="#f0b01e" stroke-width="1" stroke-dasharray="4 2.6"/>
<text x="1432.19" y="1017.80" font-size="26" fill="#e8e8e8" stroke="#e8e8e8" stroke-width="0.35">View</text>
<use href="#page" x="1704" y="870"/>
<path d="M1741.4 893.6 L1764.5 906.8 L1764.5 942.7 L1733.5 954 L1711.3 937.1 L1711.3 902.8 Z" fill="#fff0c2" stroke="#f0b01e" stroke-width="1" stroke-linejoin="round"/>
<path d="M1711.3 902.8 L1733.5 918.2 L1764.5 906.8 M1733.5 918.2 L1733.5 954" fill="none" stroke="#f0b01e" stroke-width="1"/>
<path d="M1711.3 937.1 L1741.4 925.2 L1764.5 942.7 M1741.4 925.2 L1741.4 893.6" fill="none" stroke="#f6c548" stroke-width="0.9"/>
<text x="1699.37" y="1017.80" font-size="26" fill="#e8e8e8" letter-spacing="0.600" stroke="#e8e8e8" stroke-width="0.35">Empty</text>
<use href="#page" x="1982" y="870"/>
<circle cx="2015.7" cy="924.9" r="25.8" fill="#fff0c2" stroke="#f0b01e" stroke-width="1"/>
<text x="2008.18" y="934.80" font-size="27.5" fill="#e9a81a" stroke="#e9a81a" stroke-width="0.35">1</text>
<text x="1925.37" y="1017.80" font-size="26" fill="#e8e8e8" letter-spacing="0.518" stroke="#e8e8e8" stroke-width="0.35">Launch Screen</text>
<rect x="772" y="1124" width="196" height="38" fill="#5f5f5f" rx="6"/>
<rect x="772" y="1124" width="196" height="1" fill="#6c6c6c" opacity="0"/>
<text x="827.68" y="1151.60" font-size="26" fill="#f2f2f2" letter-spacing="0.725" stroke="#f2f2f2" stroke-width="0.35">Cancel</text>
<rect x="1792" y="1124" width="164" height="38" fill="#5f5f5f" rx="6"/>
<text x="1820.17" y="1151.60" font-size="26" fill="#f2f2f2" letter-spacing="0.702" stroke="#f2f2f2" stroke-width="0.35">Previous</text>
<rect x="1984" y="1124" width="164" height="38" fill="#404040" rx="6"/>
<text x="2029.37" y="1151.60" font-size="26" fill="#707070" letter-spacing="0.753" stroke="#707070" stroke-width="0.35">Finish</text>
</svg>
<div class="sh" id="save"></div>
<svg viewBox="0 0 2918 1758">
<path d="M1106.75 152V803.25H1811.25V152" fill="none" stroke="#58585a" stroke-width="1.5"/>
<text x="1152.12" y="214.00" font-size="26" fill="#a6a6a6" letter-spacing="0.072" stroke="#a6a6a6" stroke-width="0.35">Save As:</text>
<text x="1192.22" y="273.80" font-size="26" fill="#a6a6a6" letter-spacing="-0.142" stroke="#a6a6a6" stroke-width="0.35">Tags:</text>
<text x="1170.19" y="335.80" font-size="26" fill="#a6a6a6" letter-spacing="0.537" stroke="#a6a6a6" stroke-width="0.35">Where:</text>
<rect x="1261.5" y="179.5" width="509.5" height="51.5" fill="#2a6a9e" rx="7"/>
<rect x="1267.5" y="186" width="497" height="38.5" fill="#313131"/>
<text x="1273.37" y="213.80" font-size="26" fill="#ffffff" letter-spacing="0.413" stroke="#ffffff" stroke-width="0.35">MyPlugin</text>
<rect x="1384.3" y="189" width="2" height="31" fill="#ffffff"/>
<text x="1387.13" y="213.80" font-size="26" fill="#ffffff" letter-spacing="0.728" stroke="#ffffff" stroke-width="0.35">.swift</text>
<rect x="1267.5" y="243.5" width="497" height="41" fill="#313131" stroke="#3f3f3f" stroke-width="1"/>
<rect x="1267" y="284" width="498" height="1" fill="#4c4c4c"/>
<rect x="1268" y="308" width="438" height="38" fill="#5f5f5f" rx="6"/>
<path d="M1674 308H1700Q1706 308 1706 314V340Q1706 346 1700 346H1674Z" fill="url(#gBlue)"/>
<path d="M1683.5 323.5L1690 317L1696.5 323.5M1683.5 330.5L1690 337L1696.5 330.5" fill="none" stroke="#ffffff" stroke-width="2.2"/>
<path d="M1284.5 319.5Q1284.5 316.5 1287.5 316.5H1294.5Q1296 316.5 1297 317.6L1298.5 319.2H1312.5Q1315.5 319.2 1315.5 322.2V337Q1315.5 340 1312.5 340H1287.5Q1284.5 340 1284.5 337Z" fill="#3f8fbe"/>
<path d="M1284.5 324Q1284.5 321.6 1287 321.6H1313Q1315.5 321.6 1315.5 324V337Q1315.5 340 1312.5 340H1287.5Q1284.5 340 1284.5 337Z" fill="url(#gFoldB)"/>
<text x="1325.15" y="335.80" font-size="26" fill="#f4f4f4" letter-spacing="0.840" stroke="#f4f4f4" stroke-width="0.35">App</text>
<rect x="1726" y="308" width="38" height="38" fill="#5f5f5f" rx="6"/>
<path d="M1738 323.5L1745 330.5L1752 323.5" fill="none" stroke="#f4f4f4" stroke-width="2.4"/>
<rect x="1107" y="368.5" width="704" height="1.5" fill="#434343"/>
<text x="1161.49" y="435.00" font-size="26" fill="#dedede" letter-spacing="0.834" stroke="#dedede" stroke-width="0.35">Group</text>
<rect x="1252" y="412" width="518" height="38" fill="#5f5f5f" rx="6"/>
<path d="M1738 412H1764Q1770 412 1770 418V444Q1770 450 1764 450H1738Z" fill="url(#gBlue)"/>
<path d="M1747.5 427.5L1754 421L1760.5 427.5M1747.5 434.5L1754 441L1760.5 434.5" fill="none" stroke="#ffffff" stroke-width="2.2"/>
<use href="#foldY" x="1270" y="418.5"/>
<text x="1308.95" y="440.00" font-size="26" fill="#f4f4f4" letter-spacing="0.940" stroke="#f4f4f4" stroke-width="0.35">App</text>
<text x="1148.72" y="494.00" font-size="26" fill="#dedede" letter-spacing="0.230" stroke="#dedede" stroke-width="0.35">Targets</text>
<rect x="1253" y="469" width="518" height="202" fill="#1e1e1e" stroke="#4b4b4b" stroke-width="2"/>
<rect x="1254" y="510" width="516" height="40" fill="#292929"/>
<rect x="1254" y="590" width="516" height="40" fill="#292929"/>
<rect x="1260" y="476" width="28" height="28" fill="url(#gBlue)" rx="6"/>
<path d="M1266.5 490.5L1272.5 497L1282.5 483" fill="none" stroke="#ffffff" stroke-width="3"/>
<use href="#capico" x="0" y="0" transform="translate(1298 472) scale(1.125)"/>
<text x="1345.25" y="497.50" font-size="26" fill="#f4f4f4" letter-spacing="0.790" stroke="#f4f4f4" stroke-width="0.35">App</text>
<rect x="1107" y="700" width="704" height="1.5" fill="#434343"/>
<rect x="1446" y="724" width="152" height="38" fill="#5f5f5f" rx="6"/>
<text x="1479.48" y="752.00" font-size="26" fill="#f2f2f2" letter-spacing="0.725" stroke="#f2f2f2" stroke-width="0.35">Cancel</text>
<rect x="1618" y="724" width="152" height="38" fill="url(#gBlue)" rx="6"/>
<text x="1653.48" y="752.00" font-size="26" fill="#f6f6f6" letter-spacing="0.628" stroke="#f6f6f6" stroke-width="0.35">Create</text>
</svg>
</div>
<div id="winhi"></div>
</body></html>
